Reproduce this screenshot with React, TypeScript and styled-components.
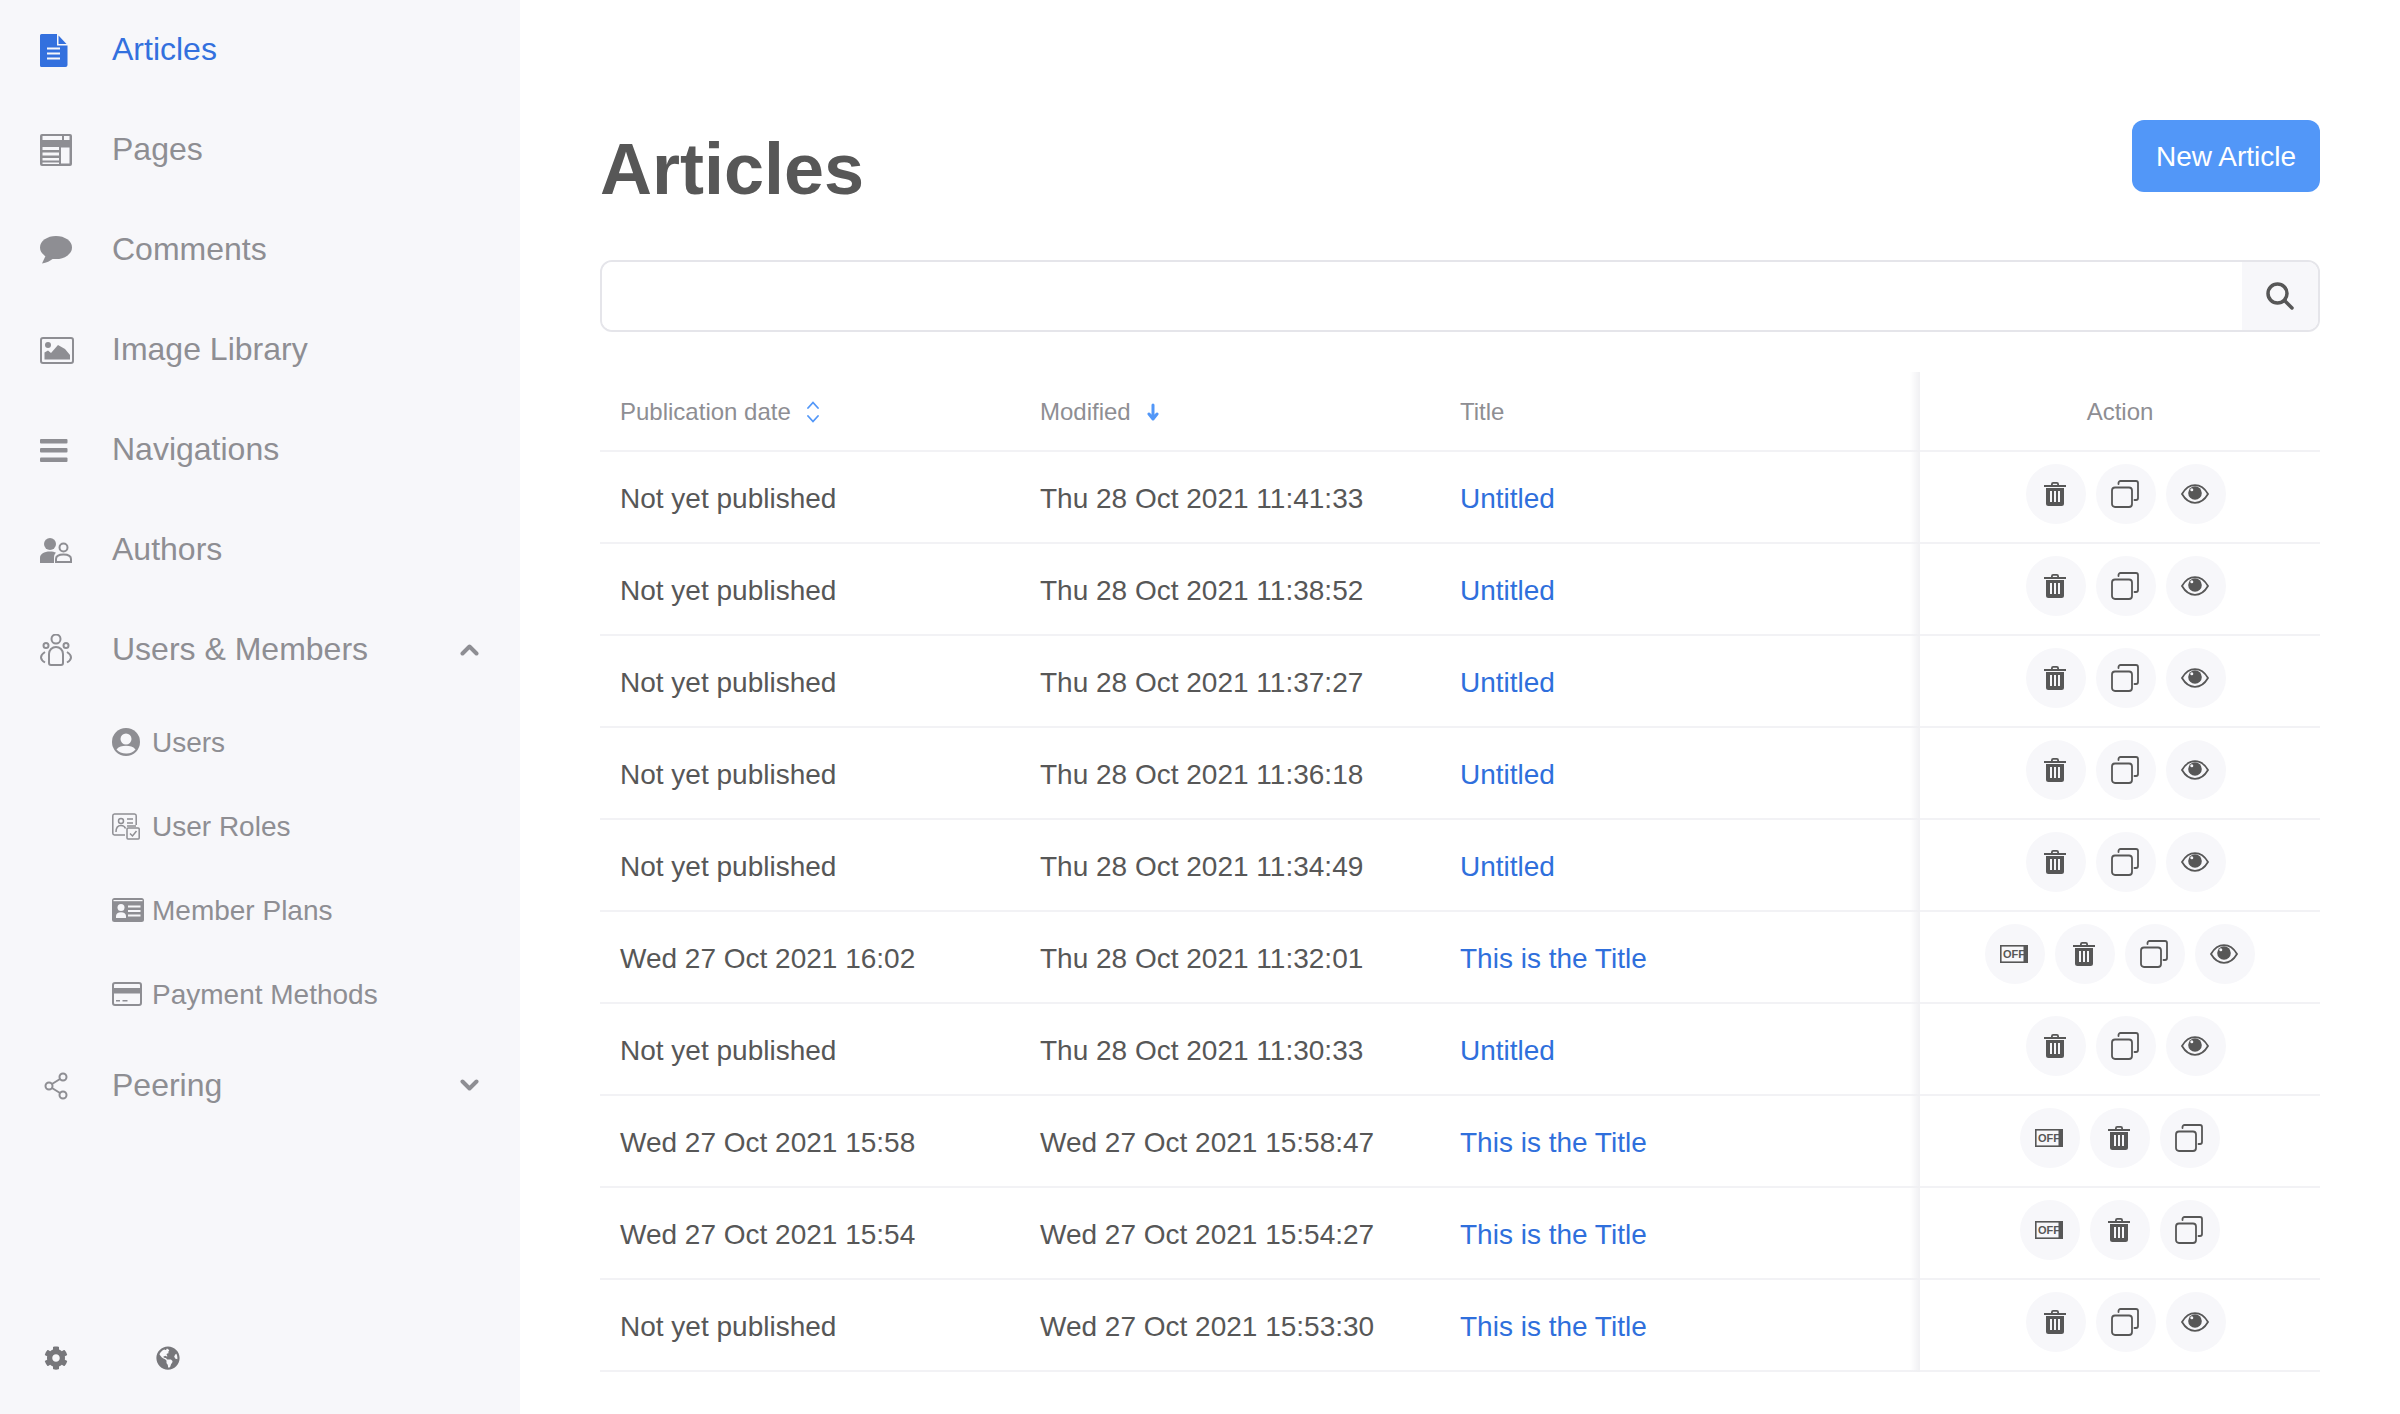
import React from "react";
import styled, { createGlobalStyle } from "styled-components";
import { FaCog, FaGlobeAmericas } from "react-icons/fa";

const GlobalStyle = createGlobalStyle`
  html, body {
    margin: 0;
    padding: 0;
    background: #fff;
    font-family: "Liberation Sans", Arial, sans-serif;
  }
  * {
    box-sizing: border-box;
  }
`;

const Page = styled.div`
  display: flex;
  width: 100%;
  height: 1414px;
  overflow: hidden;
`;

const Sidebar = styled.aside`
  width: 520px;
  flex-shrink: 0;
  display: flex;
  flex-direction: column;
  background: #f7f7fa;
`;
const NavList = styled.nav`
  flex: 1;
  display: flex;
  flex-direction: column;
`;
const NavItem = styled.a<{ $active?: boolean }>`
  height: 100px;
  display: flex;
  align-items: center;
  padding: 0 40px;
  font-size: 32px;
  color: ${props => (props.$active ? "#3370de" : "#8e8e93")};
`;
const NavIconSlot = styled.span<{ $indent?: number }>`
  width: 72px;
  flex-shrink: 0;
  display: flex;
  align-items: center;
  padding-left: ${props => props.$indent || 0}px;
`;
const NavLabel = styled.span`
  flex: 1;
  margin-bottom: 2px;
`;
const SubItem = styled.a`
  height: 84px;
  display: flex;
  align-items: center;
  padding-left: 112px;
  font-size: 28px;
  color: #8e8e93;
`;
const SubIconSlot = styled.span`
  width: 40px;
  flex-shrink: 0;
  display: flex;
  align-items: center;
`;
const SubLabel = styled.span`
  padding-top: 2px;
`;
const Caret = styled.svg`
  margin: 0 1px 2px 0;
`;
const SideFooter = styled.div`
  height: 112px;
  display: flex;
  align-items: flex-start;
  padding: 44px 0 0 44px;
  gap: 88px;
  color: #77777b;
  font-size: 24px;
`;

const Main = styled.main`
  flex: 1;
  padding: 120px 80px 0;
`;
const TitleRow = styled.div`
  display: flex;
  justify-content: space-between;
  align-items: flex-start;
`;
const Title = styled.h1`
  margin: 13px 0 0;
  font-size: 72px;
  line-height: 72px;
  font-weight: 700;
  color: #575757;
`;
const NewButton = styled.button`
  width: 188px;
  height: 72px;
  padding: 1px 0 0;
  border: none;
  border-radius: 12px;
  background: #5297f8;
  color: #fff;
  font-family: inherit;
  font-size: 28px;
`;
const SearchBox = styled.div`
  margin-top: 55px;
  height: 72px;
  display: flex;
  border: 2px solid #e5e5ea;
  border-radius: 12px;
  overflow: hidden;
`;
const SearchInput = styled.input`
  flex: 1;
  border: none;
  outline: none;
  background: #fff;
`;
const SearchAddon = styled.span`
  width: 76px;
  display: flex;
  align-items: center;
  justify-content: center;
  background: #f7f7fa;
`;

const Table = styled.div`
  margin-top: 40px;
`;
const Row = styled.div<{ $head?: boolean }>`
  display: grid;
  grid-template-columns: 420px 420px 480px 400px;
  height: ${props => (props.$head ? 80 : 92)}px;
  border-bottom: 2px solid #f2f2f5;
`;
const Cell = styled.div`
  display: flex;
  align-items: center;
  padding: 3px 20px 0;
  font-size: 28px;
  color: #575757;
`;
const HeadCell = styled(Cell)`
  padding-top: 1px;
  font-size: 24px;
  color: #8e8e93;
  gap: 16px;
`;
const TitleLink = styled.a`
  color: #2f6fdc;
`;
const FixedEdge = styled.div`
  position: relative;
  display: flex;
  justify-content: center;
  &::before {
    content: "";
    position: absolute;
    top: 0;
    bottom: -2px;
    left: -10px;
    width: 10px;
    background: linear-gradient(to right, rgba(240, 240, 243, 0), #f0f0f3);
  }
`;
const ActionHead = styled(FixedEdge)`
  align-items: center;
  padding-top: 1px;
  font-size: 24px;
  color: #8e8e93;
`;
const ActionGroup = styled(FixedEdge)`
  align-items: flex-start;
  padding-top: 12px;
  gap: 10px;
`;
const ActionSpacer = styled.span`
  width: 2px;
`;
const CircleButton = styled.button`
  width: 60px;
  height: 60px;
  padding: 0 2px 0 0;
  border: none;
  border-radius: 50%;
  background: #f7f7fa;
  color: #575757;
  display: flex;
  align-items: center;
  justify-content: center;
`;
const OffLabel = styled.text`
  font-family: "Liberation Sans", Arial, sans-serif;
  font-size: 11px;
  font-weight: 700;
  fill: currentColor;
`;

const DocIcon = () => (
  <svg width="28" height="33" viewBox="0 0 28 33" fill="currentColor">
    <path d="M1.5 0H17V11.5H27.5V31a2 2 0 0 1-2 2H1.500a1.500 1.500 0 0 1-1.500-1.500V1.500A1.500 1.500 0 0 1 1.500 0z" />
    <path d="M18.500 1.500L26.500 10H18.500z" />
    <path d="M7 13.500h13v2H7zM7 18.500h13v2H7zM7 23.500h13v2H7z" fill="#f7f7fa" />
  </svg>
);
const PagesIcon = () => (
  <svg width="32" height="32" viewBox="0 0 32 32" fill="currentColor">
    <path
      fillRule="evenodd"
      d="M2 0h28a2 2 0 0 1 2 2v28a2 2 0 0 1-2 2H2a2 2 0 0 1-2-2V2a2 2 0 0 1 2-2zM2.500 2v4H22V2zM24 2v4h5.500V2zM2.500 13v3H19v-3zM2.500 18.500v3H19v-3zM2.500 24v2.500H19V24zM2.500 28.500V30H19v-1.500zM21 13.500V29.500h8.500V13.500z"
    />
  </svg>
);
const CommentIcon = () => (
  <svg width="32" height="28" viewBox="0 0 32 28" fill="currentColor">
    <ellipse cx="16" cy="11.500" rx="16" ry="11.500" />
    <path d="M6 19L2 27.500C6.500 27 10 25 14 22z" />
  </svg>
);
const ImageIcon = () => (
  <svg width="34" height="27" viewBox="0 0 34 27" fill="currentColor">
    <rect x="1" y="1" width="32" height="25" rx="2" fill="none" stroke="currentColor" strokeWidth="2" />
    <circle cx="8" cy="8" r="3" />
    <path d="M4.500 22.500V15.500L8 13.500l3 2.500L18 8l7 4 5 6v4.500z" />
  </svg>
);
const MenuIcon = () => (
  <svg width="28" height="23" viewBox="0 0 28 23" fill="currentColor">
    <rect width="27.500" height="4.500" rx="1" />
    <rect y="9" width="27.500" height="4.500" rx="1" />
    <rect y="18.500" width="27.500" height="4.500" rx="1" />
  </svg>
);
const AuthorsIcon = () => (
  <svg width="32" height="25" viewBox="0 0 32 25" fill="currentColor">
    <circle cx="10" cy="6" r="6" />
    <path d="M0 25v-5c0-4 4-6.500 10-6.500 2.500 0 4.500.4 6 1.200-1.500 1.200-2 3-2 5V25z" />
    <circle cx="23.500" cy="9.500" r="4" fill="none" stroke="currentColor" strokeWidth="2" />
    <path d="M16 24v-3c0-3 3-4.500 7.500-4.500S31 18 31 21v3z" fill="none" stroke="currentColor" strokeWidth="2" />
  </svg>
);
const MembersIcon = () => (
  <svg width="32" height="32" viewBox="0 0 32 32" fill="none" stroke="currentColor" strokeWidth="2">
    <circle cx="16" cy="5" r="4.500" />
    <circle cx="6" cy="11.500" r="2.500" />
    <circle cx="26" cy="11.500" r="2.500" />
    <path d="M9 29v-9a7 7 0 0 1 14 0v9a2 2 0 0 1-2 2H11a2 2 0 0 1-2-2z" />
    <path d="M5 18c-2.500 1.500-4 3.500-4 5.500 0 1.800 1.500 3.500 4 5M27 18c2.500 1.500 4 3.500 4 5.500 0 1.800-1.500 3.500-4 5" />
  </svg>
);
const PeeringIcon = () => (
  <svg width="24" height="28" viewBox="0 0 24 28" fill="none" stroke="currentColor" strokeWidth="2">
    <circle cx="19" cy="5" r="3.500" />
    <circle cx="19" cy="23" r="3.500" />
    <circle cx="5" cy="14" r="3.500" />
    <path d="M8 12L16 7M8 16l8 5" />
  </svg>
);
const UserIcon = () => (
  <svg width="28" height="28" viewBox="0 0 28 28">
    <circle cx="14" cy="14" r="14" fill="currentColor" />
    <circle cx="14" cy="11" r="5.500" fill="#f7f7fa" />
    <path d="M4.500 21.500C7 18.500 10 17.800 14 17.800s7 .7 9.500 3.700A11.500 11.500 0 0 1 14 25.500c-3.800 0-7.200-1.500-9.500-4z" fill="#f7f7fa" />
  </svg>
);
const RolesIcon = () => (
  <svg width="28" height="27" viewBox="0 0 28 27" fill="none" stroke="currentColor" strokeWidth="1.500">
    <path d="M13 22H2.500A1.800 1.800 0 0 1 .8 20.200V2.800A1.800 1.800 0 0 1 2.500 1h20a1.800 1.800 0 0 1 1.700 1.800V12" />
    <circle cx="9" cy="8" r="2.500" />
    <path d="M4 19c0-4 2-6.500 5-6.500s4 1.500 4.500 3" />
    <path d="M15 6h6M15 10h6M15 13h9" />
    <rect x="15" y="15" width="12.200" height="11" rx="1" />
    <path d="M18 20.500l2.500 2.500 4-5" />
  </svg>
);
const PlansIcon = () => (
  <svg width="32" height="24" viewBox="0 0 32 24">
    <rect width="32" height="24" rx="2.500" fill="currentColor" />
    <rect x="1.500" y="2" width="29" height="1.200" fill="#f7f7fa" />
    <circle cx="9" cy="9.500" r="3.500" fill="#f7f7fa" />
    <path d="M4 20v-2c0-2.500 2-3.800 5-3.800s5 1.300 5 3.800v2z" fill="#f7f7fa" />
    <path d="M16 7.500h12.500v2H16zM16 12h12.500v2H16zM16 16.500h12.500v2H16z" fill="#f7f7fa" />
  </svg>
);
const CardIcon = () => (
  <svg width="30" height="24" viewBox="0 0 30 24">
    <rect x="1" y="1" width="28" height="22" rx="2" fill="none" stroke="currentColor" strokeWidth="2" />
    <rect x="1" y="6" width="28" height="5.500" fill="currentColor" />
    <path d="M4 18h4v1.500H4zM10.500 18h5v1.500h-5z" fill="currentColor" />
  </svg>
);
const ChevronUp = () => (
  <Caret width="19" height="13" viewBox="0 0 19 13" fill="none" stroke="currentColor" strokeWidth="4" strokeLinecap="round" strokeLinejoin="round">
    <path d="M2.500 10.500L9.500 3.500l7 7" />
  </Caret>
);
const ChevronDown = () => (
  <Caret width="19" height="13" viewBox="0 0 19 13" fill="none" stroke="currentColor" strokeWidth="4" strokeLinecap="round" strokeLinejoin="round">
    <path d="M2.500 2.500l7 7 7-7" />
  </Caret>
);

const SearchIcon = () => (
  <svg width="28" height="28" viewBox="0 0 28 28" fill="none" stroke="#575757" strokeWidth="3.500" strokeLinecap="round">
    <circle cx="11.500" cy="11.500" r="9.500" />
    <path d="M18.500 18.500L26 26" />
  </svg>
);
const SortIcon = () => (
  <svg width="12" height="22" viewBox="0 0 12 22" fill="none" stroke="#5297f8" strokeWidth="1.800" strokeLinecap="round">
    <path d="M1 7l5-5.500L11 7M1 15l5 5.500L11 15" />
  </svg>
);
const ArrowDownIcon = () => (
  <svg width="12" height="18" viewBox="0 0 12 18" fill="none" stroke="#5297f8" strokeWidth="3" strokeLinecap="round" strokeLinejoin="round">
    <path d="M6 2v13M2 11l4 5 4-5" />
  </svg>
);
const TrashIcon = () => (
  <svg width="22" height="24" viewBox="0 0 22 24" fill="currentColor">
    <path fillRule="evenodd" d="M7 3V2.200A2.200 2.200 0 0 1 9.200 0h3.600A2.200 2.200 0 0 1 15 2.200V3h7v2H0V3zM8.800 3h4.400V2.200a.4.4 0 0 0-.4-.4H9.200a.4.4 0 0 0-.4.4z" />
    <path
      fillRule="evenodd"
      d="M2 6h18v15.500a2.500 2.500 0 0 1-2.500 2.500h-13A2.500 2.500 0 0 1 2 21.500zM6 9v11h2V9zM10 9v11h2V9zM14 9v11h2V9z"
    />
  </svg>
);
const CopyIcon = () => (
  <svg width="28" height="28" viewBox="0 0 28 28" fill="none" stroke="currentColor" strokeWidth="1.800" strokeLinecap="round">
    <rect x="1" y="7.500" width="20" height="19.500" rx="3" />
    <path d="M7.500 4V3a2 2 0 0 1 2-2H25a2 2 0 0 1 2 2v15a2 2 0 0 1-2 2h-1.500" />
  </svg>
);
const EyeIcon = () => (
  <svg width="28" height="20" viewBox="0 0 28 20">
    <path d="M1 10C4.500 4 9 1.200 14 1.200S23.500 4 27 10c-3.500 6-8 8.800-13 8.800S4.500 16 1 10z" fill="none" stroke="currentColor" strokeWidth="1.800" />
    <circle cx="14" cy="9" r="6.800" fill="currentColor" />
    <circle cx="10.800" cy="5.800" r="1.500" fill="#f7f7fa" />
  </svg>
);
const OffIcon = () => (
  <svg width="28" height="18" viewBox="0 0 28 18">
    <rect x=".8" y=".8" width="26.400" height="16.400" fill="none" stroke="currentColor" strokeWidth="1.600" />
    <rect x="23.500" y="1" width="4.500" height="16" fill="currentColor" />
    <OffLabel x="3" y="13">OFF</OffLabel>
  </svg>
);

type Action = "off" | "trash" | "copy" | "eye";

const renderAction = (action: Action) => {
  if (action === "off") return <OffIcon />;
  if (action === "trash") return <TrashIcon />;
  if (action === "copy") return <CopyIcon />;
  return <EyeIcon />;
};

interface IArticle {
  published: string;
  modified: string;
  title: string;
  actions: Action[];
}

const DRAFT: Action[] = ["trash", "copy", "eye"];

const articles: IArticle[] = [
  { published: "Not yet published", modified: "Thu 28 Oct 2021 11:41:33", title: "Untitled", actions: DRAFT },
  { published: "Not yet published", modified: "Thu 28 Oct 2021 11:38:52", title: "Untitled", actions: DRAFT },
  { published: "Not yet published", modified: "Thu 28 Oct 2021 11:37:27", title: "Untitled", actions: DRAFT },
  { published: "Not yet published", modified: "Thu 28 Oct 2021 11:36:18", title: "Untitled", actions: DRAFT },
  { published: "Not yet published", modified: "Thu 28 Oct 2021 11:34:49", title: "Untitled", actions: DRAFT },
  { published: "Wed 27 Oct 2021 16:02", modified: "Thu 28 Oct 2021 11:32:01", title: "This is the Title", actions: ["off", "trash", "copy", "eye"] },
  { published: "Not yet published", modified: "Thu 28 Oct 2021 11:30:33", title: "Untitled", actions: DRAFT },
  { published: "Wed 27 Oct 2021 15:58", modified: "Wed 27 Oct 2021 15:58:47", title: "This is the Title", actions: ["off", "trash", "copy"] },
  { published: "Wed 27 Oct 2021 15:54", modified: "Wed 27 Oct 2021 15:54:27", title: "This is the Title", actions: ["off", "trash", "copy"] },
  { published: "Not yet published", modified: "Wed 27 Oct 2021 15:53:30", title: "This is the Title", actions: DRAFT }
];

const App = () => {
  return (
    <Page>
      <GlobalStyle />
      <Sidebar>
        <NavList>
          <NavItem $active>
            <NavIconSlot><DocIcon /></NavIconSlot>
            <NavLabel>Articles</NavLabel>
          </NavItem>
          <NavItem>
            <NavIconSlot><PagesIcon /></NavIconSlot>
            <NavLabel>Pages</NavLabel>
          </NavItem>
          <NavItem>
            <NavIconSlot><CommentIcon /></NavIconSlot>
            <NavLabel>Comments</NavLabel>
          </NavItem>
          <NavItem>
            <NavIconSlot><ImageIcon /></NavIconSlot>
            <NavLabel>Image Library</NavLabel>
          </NavItem>
          <NavItem>
            <NavIconSlot><MenuIcon /></NavIconSlot>
            <NavLabel>Navigations</NavLabel>
          </NavItem>
          <NavItem>
            <NavIconSlot><AuthorsIcon /></NavIconSlot>
            <NavLabel>Authors</NavLabel>
          </NavItem>
          <NavItem>
            <NavIconSlot><MembersIcon /></NavIconSlot>
            <NavLabel>Users &amp; Members</NavLabel>
            <ChevronUp />
          </NavItem>
          <SubItem>
            <SubIconSlot><UserIcon /></SubIconSlot>
            <SubLabel>Users</SubLabel>
          </SubItem>
          <SubItem>
            <SubIconSlot><RolesIcon /></SubIconSlot>
            <SubLabel>User Roles</SubLabel>
          </SubItem>
          <SubItem>
            <SubIconSlot><PlansIcon /></SubIconSlot>
            <SubLabel>Member Plans</SubLabel>
          </SubItem>
          <SubItem>
            <SubIconSlot><CardIcon /></SubIconSlot>
            <SubLabel>Payment Methods</SubLabel>
          </SubItem>
          <NavItem>
            <NavIconSlot $indent={4}><PeeringIcon /></NavIconSlot>
            <NavLabel>Peering</NavLabel>
            <ChevronDown />
          </NavItem>
        </NavList>
        <SideFooter>
          <FaCog />
          <FaGlobeAmericas />
        </SideFooter>
      </Sidebar>
      <Main>
        <TitleRow>
          <Title>Articles</Title>
          <NewButton>New Article</NewButton>
        </TitleRow>
        <SearchBox>
          <SearchInput />
          <SearchAddon><SearchIcon /></SearchAddon>
        </SearchBox>
        <Table>
          <Row $head>
            <HeadCell>Publication date <SortIcon /></HeadCell>
            <HeadCell>Modified <ArrowDownIcon /></HeadCell>
            <HeadCell>Title</HeadCell>
            <ActionHead>Action</ActionHead>
          </Row>
          {articles.map(article => (
            <Row key={article.modified}>
              <Cell>{article.published}</Cell>
              <Cell>{article.modified}</Cell>
              <Cell><TitleLink>{article.title}</TitleLink></Cell>
              <ActionGroup>
                {article.actions[0] === "trash" && <ActionSpacer />}
                {article.actions.map(action => (
                  <CircleButton key={action}>{renderAction(action)}</CircleButton>
                ))}
              </ActionGroup>
            </Row>
          ))}
        </Table>
      </Main>
    </Page>
  );
};

export default App;
